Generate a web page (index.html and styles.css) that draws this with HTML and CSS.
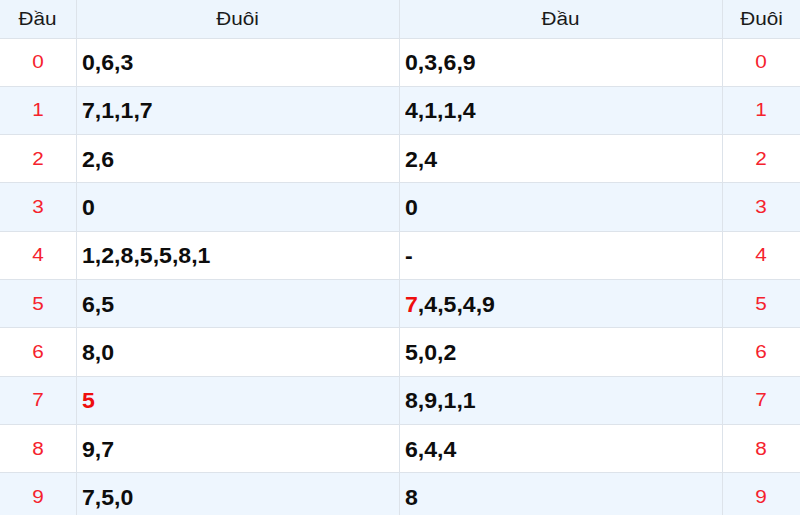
FILE: index.html
```html
<!DOCTYPE html>
<html lang="vi">
<head>
<meta charset="utf-8">
<title>Đầu Đuôi</title>
<link rel="stylesheet" href="styles.css">
</head>
<body>
<div class="table">
  <div class="cell head"><span class="t">Đầu</span></div>
  <div class="cell head"><span class="t">Đuôi</span></div>
  <div class="cell head"><span class="t">Đầu</span></div>
  <div class="cell head"><span class="t">Đuôi</span></div>

  <div class="cell num"><span class="t">0</span></div>
  <div class="cell val"><span class="b">0,6,3</span></div>
  <div class="cell val"><span class="b">0,3,6,9</span></div>
  <div class="cell num"><span class="t">0</span></div>

  <div class="cell num alt"><span class="t">1</span></div>
  <div class="cell val alt"><span class="b">7,1,1,7</span></div>
  <div class="cell val alt"><span class="b">4,1,1,4</span></div>
  <div class="cell num alt"><span class="t">1</span></div>

  <div class="cell num"><span class="t">2</span></div>
  <div class="cell val"><span class="b">2,6</span></div>
  <div class="cell val"><span class="b">2,4</span></div>
  <div class="cell num"><span class="t">2</span></div>

  <div class="cell num alt"><span class="t">3</span></div>
  <div class="cell val alt"><span class="b">0</span></div>
  <div class="cell val alt"><span class="b">0</span></div>
  <div class="cell num alt"><span class="t">3</span></div>

  <div class="cell num"><span class="t">4</span></div>
  <div class="cell val"><span class="b">1,2,8,5,5,8,1</span></div>
  <div class="cell val"><span class="b">-</span></div>
  <div class="cell num"><span class="t">4</span></div>

  <div class="cell num alt"><span class="t">5</span></div>
  <div class="cell val alt"><span class="b">6,5</span></div>
  <div class="cell val alt"><span class="b"><span class="hot">7</span>,4,5,4,9</span></div>
  <div class="cell num alt"><span class="t">5</span></div>

  <div class="cell num"><span class="t">6</span></div>
  <div class="cell val"><span class="b">8,0</span></div>
  <div class="cell val"><span class="b">5,0,2</span></div>
  <div class="cell num"><span class="t">6</span></div>

  <div class="cell num alt"><span class="t">7</span></div>
  <div class="cell val alt"><span class="b"><span class="hot">5</span></span></div>
  <div class="cell val alt"><span class="b">8,9,1,1</span></div>
  <div class="cell num alt"><span class="t">7</span></div>

  <div class="cell num"><span class="t">8</span></div>
  <div class="cell val"><span class="b">9,7</span></div>
  <div class="cell val"><span class="b">6,4,4</span></div>
  <div class="cell num"><span class="t">8</span></div>

  <div class="cell num alt"><span class="t">9</span></div>
  <div class="cell val alt"><span class="b">7,5,0</span></div>
  <div class="cell val alt"><span class="b">8</span></div>
  <div class="cell num alt"><span class="t">9</span></div>
</div>
</body>
</html>
```

FILE: styles.css
```css
html, body {
  margin: 0;
  padding: 0;
  background: #ffffff;
}
body {
  width: 800px;
  height: 515px;
  overflow: hidden;
  font-family: "Liberation Sans", Arial, sans-serif;
  color: #111111;
}
.table {
  display: grid;
  grid-template-columns: 77px 323px 323px 77px;
  grid-template-rows: 38.5px repeat(10, 48.3px);
}
.cell {
  box-sizing: border-box;
  border-right: 1px solid #dde3ea;
  border-bottom: 1px solid #dde3ea;
  display: flex;
  align-items: center;
  background: #ffffff;
}
.cell:nth-child(4n) {
  border-right: none;
}
.head {
  background: #edf5fd;
  justify-content: center;
  font-size: 18px;
  color: #1a1a1a;
  padding-top: 1px;
}
.alt {
  background: #eef6fe;
}
.num {
  justify-content: center;
  font-size: 18px;
  color: #f5222d;
  padding-top: 1px;
}
.val {
  justify-content: flex-start;
  padding-left: 5px;
  padding-top: 2px;
}
.t {
  display: inline-block;
  transform: scaleX(1.15);
}
.b {
  display: inline-block;
  font-size: 22px;
  font-weight: 700;
  color: #0d0d0d;
  transform: scaleX(1.05);
  transform-origin: left center;
}
.hot {
  color: #ee0e0e;
}
```
